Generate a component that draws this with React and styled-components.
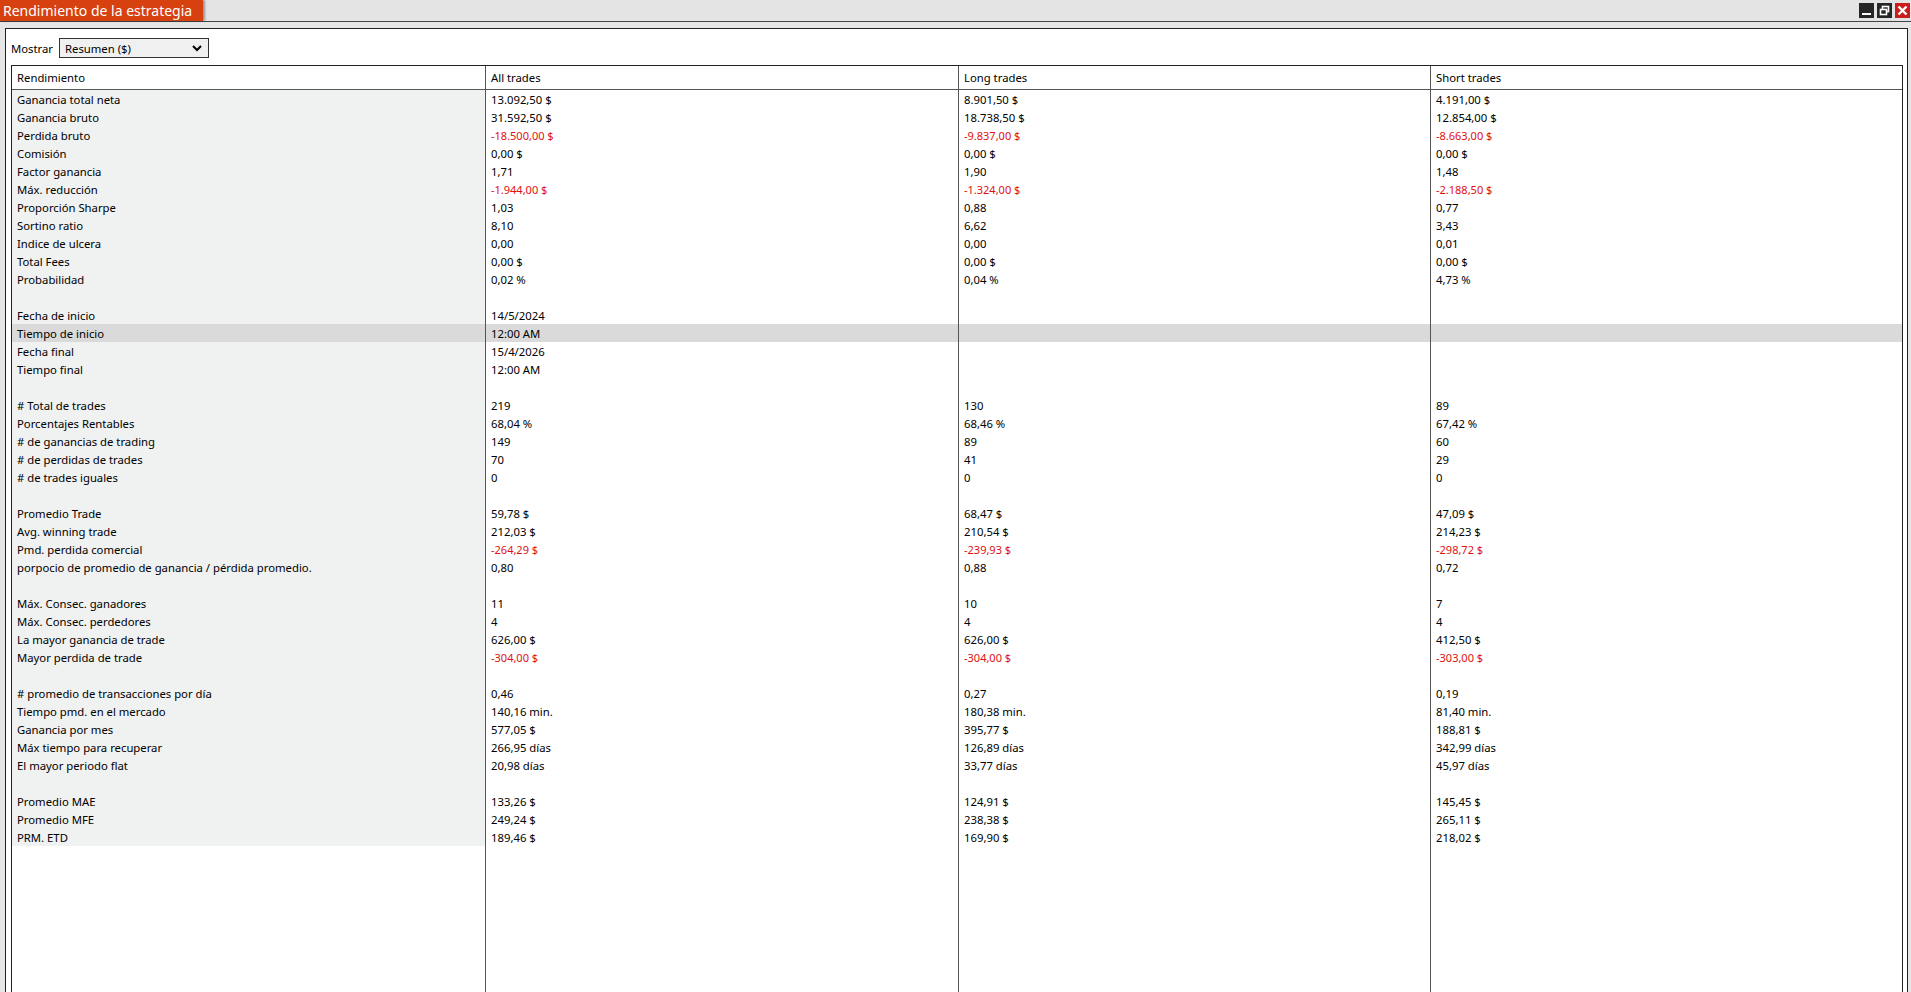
import React from "react";
import styled, { createGlobalStyle } from "styled-components";

const G = createGlobalStyle`
  html,body{margin:0;padding:0;background:#fff;}
  body{font-family:"Noto Sans","Open Sans",sans-serif;font-size:11.3px;color:#000;}
`;
const Win = styled.div`height:992px;display:flex;flex-direction:column;background:#e6e6e6;overflow:hidden;`;
const TitleBar = styled.div`height:22px;display:flex;align-items:stretch;justify-content:space-between;border-bottom:1px solid #444;box-sizing:border-box;background:#e4e4e4;`;
const Tab = styled.div`background:#d7400f;color:#fff;font-size:14px;padding:0 6px 0 3px;display:flex;align-items:center;width:194px;white-space:nowrap;box-shadow:2px 0 2px rgba(0,0,0,.35);`;
const Btns = styled.div`display:flex;gap:3px;align-items:center;padding-right:1px;`;
const Btn = styled.div`width:15px;height:15px;background:${p=>p.red?"#c81e1e":"#262626"};display:flex;align-items:center;justify-content:center;`;
const Body = styled.div`flex:1;margin:6px 3px 0 5px;border:1px solid #222;border-bottom:none;background:#fff;display:flex;flex-direction:column;padding:0 4px 0 5px;`;
const Toolbar = styled.div`height:28px;margin-top:5px;display:flex;align-items:center;gap:6px;padding-left:0;`;
const Select = styled.div`width:150px;height:20px;border:1px solid #333;background:#f0f0f0;display:flex;align-items:center;justify-content:space-between;padding:0 6px 0 5px;box-sizing:border-box;`;
const Table = styled.div`flex:1;border:1px solid #222;border-bottom:none;display:flex;flex-direction:column;margin-top:3px;`;
const Grid = styled.div`display:grid;grid-template-columns:473px 473px 472px 1fr;`;
const Head = styled(Grid)`height:23px;border-bottom:1px solid #555;align-items:center;`;
const HCell = styled.div`padding-left:5px;height:100%;display:flex;align-items:center;border-left:${p=>p.first?"none":"1px solid #555"};`;
const Row = styled(Grid)`height:18px;background:${p=>p.hl?"#dadada":"transparent"};`;
const Cell = styled.div`padding-left:5px;display:flex;align-items:center;white-space:nowrap;color:${p=>p.neg?"#e01010":"#000"};
  background:${p=>p.first&&!p.hl?"#f0f1f1":"transparent"};border-left:${p=>p.first?"none":"1px solid #555"};font-size:${p=>p.neg?"11px":"11.3px"};`;
const Fill = styled(Grid)`flex:1;`;
const FCell = styled.div`border-left:${p=>p.first?"none":"1px solid #555"};`;

const D = [
["Ganancia total neta","13.092,50 $","8.901,50 $","4.191,00 $"],
["Ganancia bruto","31.592,50 $","18.738,50 $","12.854,00 $"],
["Perdida bruto","-18.500,00 $","-9.837,00 $","-8.663,00 $"],
["Comisión","0,00 $","0,00 $","0,00 $"],
["Factor ganancia","1,71","1,90","1,48"],
["Máx. reducción","-1.944,00 $","-1.324,00 $","-2.188,50 $"],
["Proporción Sharpe","1,03","0,88","0,77"],
["Sortino ratio","8,10","6,62","3,43"],
["Indice de ulcera","0,00","0,00","0,01"],
["Total Fees","0,00 $","0,00 $","0,00 $"],
["Probabilidad","0,02 %","0,04 %","4,73 %"],
["","","",""],
["Fecha de inicio","14/5/2024","",""],
["Tiempo de inicio","12:00 AM","",""],
["Fecha final","15/4/2026","",""],
["Tiempo final","12:00 AM","",""],
["","","",""],
["# Total de trades","219","130","89"],
["Porcentajes Rentables","68,04 %","68,46 %","67,42 %"],
["# de ganancias de trading","149","89","60"],
["# de perdidas de trades","70","41","29"],
["# de trades iguales","0","0","0"],
["","","",""],
["Promedio Trade","59,78 $","68,47 $","47,09 $"],
["Avg. winning trade","212,03 $","210,54 $","214,23 $"],
["Pmd. perdida comercial","-264,29 $","-239,93 $","-298,72 $"],
["porpocio de promedio de ganancia / pérdida promedio.","0,80","0,88","0,72"],
["","","",""],
["Máx. Consec. ganadores","11","10","7"],
["Máx. Consec. perdedores","4","4","4"],
["La mayor ganancia de trade","626,00 $","626,00 $","412,50 $"],
["Mayor perdida de trade","-304,00 $","-304,00 $","-303,00 $"],
["","","",""],
["# promedio de transacciones por día","0,46","0,27","0,19"],
["Tiempo pmd. en el mercado","140,16 min.","180,38 min.","81,40 min."],
["Ganancia por mes","577,05 $","395,77 $","188,81 $"],
["Máx tiempo para recuperar","266,95 días","126,89 días","342,99 días"],
["El mayor periodo flat","20,98 días","33,77 días","45,97 días"],
["","","",""],
["Promedio MAE","133,26 $","124,91 $","145,45 $"],
["Promedio MFE","249,24 $","238,38 $","265,11 $"],
["PRM. ETD","189,46 $","169,90 $","218,02 $"],
];

export default function App(){
  return (<Win><G/>
    <TitleBar>
      <Tab>Rendimiento de la estrategia</Tab>
      <Btns>
        <Btn><svg width="11" height="11"><rect x="1" y="8" width="9" height="2" fill="#fff"/></svg></Btn>
        <Btn><svg width="11" height="11"><rect x="3.5" y="1.5" width="6" height="5" fill="none" stroke="#fff" strokeWidth="1.6"/><rect x="1.5" y="4.5" width="6" height="5" fill="#262626" stroke="#fff" strokeWidth="1.6"/></svg></Btn>
        <Btn red><svg width="11" height="11"><path d="M1.5 1.5L9.5 9.5M9.5 1.5L1.5 9.5" stroke="#fff" strokeWidth="2.4"/></svg></Btn>
      </Btns>
    </TitleBar>
    <Body>
      <Toolbar>Mostrar<Select>Resumen ($)<svg width="10" height="7"><path d="M1 1L5 5L9 1" fill="none" stroke="#000" strokeWidth="2"/></svg></Select></Toolbar>
      <Table>
        <Head><HCell first>Rendimiento</HCell><HCell>All trades</HCell><HCell>Long trades</HCell><HCell>Short trades</HCell></Head>
        {D.map((r,i)=>{const hl=r[0]==="Tiempo de inicio";return (
          <Row key={i} hl={hl}>{r.map((c,j)=><Cell key={j} first={j===0} hl={hl} neg={c.startsWith("-")}>{c}</Cell>)}</Row>);})}
        <Fill><FCell first/><FCell/><FCell/><FCell/></Fill>
      </Table>
    </Body>
  </Win>);
}
